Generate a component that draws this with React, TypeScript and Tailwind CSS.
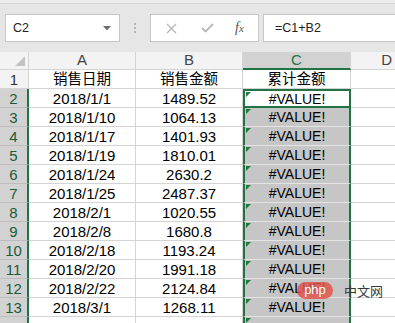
import React from "react";

const rows: [string, string, string][] = [
  ["销售日期", "销售金额", "累计金额"],
  ["2018/1/1", "1489.52", "#VALUE!"],
  ["2018/1/10", "1064.13", "#VALUE!"],
  ["2018/1/17", "1401.93", "#VALUE!"],
  ["2018/1/19", "1810.01", "#VALUE!"],
  ["2018/1/24", "2630.2", "#VALUE!"],
  ["2018/1/25", "2487.37", "#VALUE!"],
  ["2018/2/1", "1020.55", "#VALUE!"],
  ["2018/2/8", "1680.8", "#VALUE!"],
  ["2018/2/18", "1193.24", "#VALUE!"],
  ["2018/2/20", "1991.18", "#VALUE!"],
  ["2018/2/22", "2124.84", "#VALUE!"],
  ["2018/3/1", "1268.11", "#VALUE!"],
  ["", "", ""],
];

function ErrorMark() {
  return (
    <svg width="5" height="5" viewBox="0 0 5 5" className="absolute left-[1px] top-[1px]">
      <polygon points="0,0 5,0 0,5" fill="#1e7a3c" />
    </svg>
  );
}

export default function App() {
  return (
    <div className="relative w-[395px] h-[323px] overflow-hidden bg-[#e6e6e6] font-['Liberation_Sans','Noto_Sans_CJK_SC',sans-serif] text-black">
      {/* top strip */}
      <div className="h-[4px] bg-[#ececec] border-b border-[#d4d4d4]" />

      {/* formula bar */}
      <div className="flex items-center h-[28px] mt-[10px]">
        <div className="ml-[5px] w-[115px] h-full bg-white border border-[#c6c6c6] flex items-center justify-between pl-[7px] pr-[8px]">
          <span className="text-[12.5px] text-[#222]">C2</span>
          <svg width="8" height="5" viewBox="0 0 8 5">
            <polygon points="0,0 8,0 4,4.5" fill="#6e6e6e" />
          </svg>
        </div>
        <div className="w-[30px] flex flex-col items-center gap-[2px]">
          <span className="w-[2px] h-[2px] bg-[#b4b4b4]" />
          <span className="w-[2px] h-[2px] bg-[#b4b4b4]" />
          <span className="w-[2px] h-[2px] bg-[#b4b4b4]" />
        </div>
        <div className="w-[109px] h-full bg-white border border-[#c6c6c6] flex items-center pl-[15px]">
          <svg width="11" height="11" viewBox="0 0 11 11">
            <path d="M1 1 L10 10 M10 1 L1 10" stroke="#b8b8b8" strokeWidth="1.4" />
          </svg>
          <svg width="13" height="10" viewBox="0 0 13 10" className="ml-[24px]">
            <path d="M1 5 L4.5 8.5 L12 1" stroke="#b8b8b8" strokeWidth="1.8" fill="none" />
          </svg>
          <span className="ml-[21px] font-['Liberation_Serif',serif] italic text-[14px] text-[#555] leading-none">
            f<span className="text-[11px]">x</span>
          </span>
        </div>
        <div className="ml-[4px] flex-1 h-full bg-white border border-[#c6c6c6] border-r-0 flex items-center pl-[11px]">
          <span className="text-[12.5px] text-[#222]">=C1+B2</span>
        </div>
      </div>

      {/* sheet */}
      <div className="relative mt-[10px] bg-white">
        {/* column headers */}
        <div className="flex h-[18px] text-[15px] text-[#444]">
          <div className="w-[29px] bg-[#f3f3f3] border-r border-b border-[#d4d4d4] flex items-end justify-end pr-[3px] pb-[3px]">
            <svg width="10" height="10" viewBox="0 0 10 10">
              <polygon points="10,0 10,10 0,10" fill="#c3c3c3" />
            </svg>
          </div>
          <div className="w-[107px] bg-[#f3f3f3] border-r border-b border-[#d4d4d4] flex items-center justify-center">A</div>
          <div className="w-[107px] bg-[#f3f3f3] border-r border-b border-[#d4d4d4] flex items-center justify-center">B</div>
          <div className="w-[108px] bg-[#d2d2d2] border-r border-[#d4d4d4] border-b-2 border-b-[#217346] flex items-center justify-center text-[#217346]">C</div>
          <div className="flex-1 bg-[#f3f3f3] border-b border-[#d4d4d4] flex items-center justify-end pr-[3px]">D</div>
        </div>

        {rows.map((r, i) => {
          const sel = i >= 1;
          const last = i === rows.length - 1;
          return (
            <div key={i} className="flex h-[19px] text-[15px] leading-none">
              <div
                className={
                  sel
                    ? "w-[29px] bg-[#d2d2d2] border-b border-[#bdbdbd] border-r-2 border-r-[#217346] flex items-center justify-center text-[#1d5a3a]"
                    : "w-[29px] bg-[#f3f3f3] border-r border-b border-[#d4d4d4] flex items-center justify-center text-[#333]"
                }
              >
                {last ? "" : i + 1}
              </div>
              <div className={`w-[107px] border-r border-b border-[#d4d4d4] flex items-center justify-center ${i === 0 ? "text-[14.5px]" : ""}`}>
                {r[0]}
              </div>
              <div className={`w-[107px] border-r border-b border-[#d4d4d4] flex items-center justify-center ${i === 0 ? "text-[14.5px]" : ""}`}>
                {r[1]}
              </div>
              <div
                className={`relative w-[108px] flex items-center justify-center border-b ${
                  i === 0
                    ? "border-r border-[#d4d4d4] text-[14.5px]"
                    : i === 1
                    ? "border-[#217346] border-x-2 border-t-2 border-b-2 bg-white text-[14px]"
                    : "border-[#e4e4e4] border-x-2 border-x-[#217346] bg-[#c6c6c6] text-[14px]"
                }`}
              >
                {i >= 1 && <ErrorMark />}
                {r[2]}
              </div>
              <div className="flex-1 border-b border-[#d4d4d4]" />
            </div>
          );
        })}
      </div>

      {/* watermark */}
      <div className="absolute left-[297px] top-[282px] flex items-center">
        <div className="w-[36px] h-[17px] rounded-full bg-[#e0544c]/85 flex items-center justify-center text-white text-[13px] leading-none pb-[2px]">
          php
        </div>
        <span className="ml-[11px] text-[13px] text-[#3a3a3a] font-['Noto_Sans_CJK_SC',sans-serif] leading-none">中文网</span>
      </div>
    </div>
  );
}
